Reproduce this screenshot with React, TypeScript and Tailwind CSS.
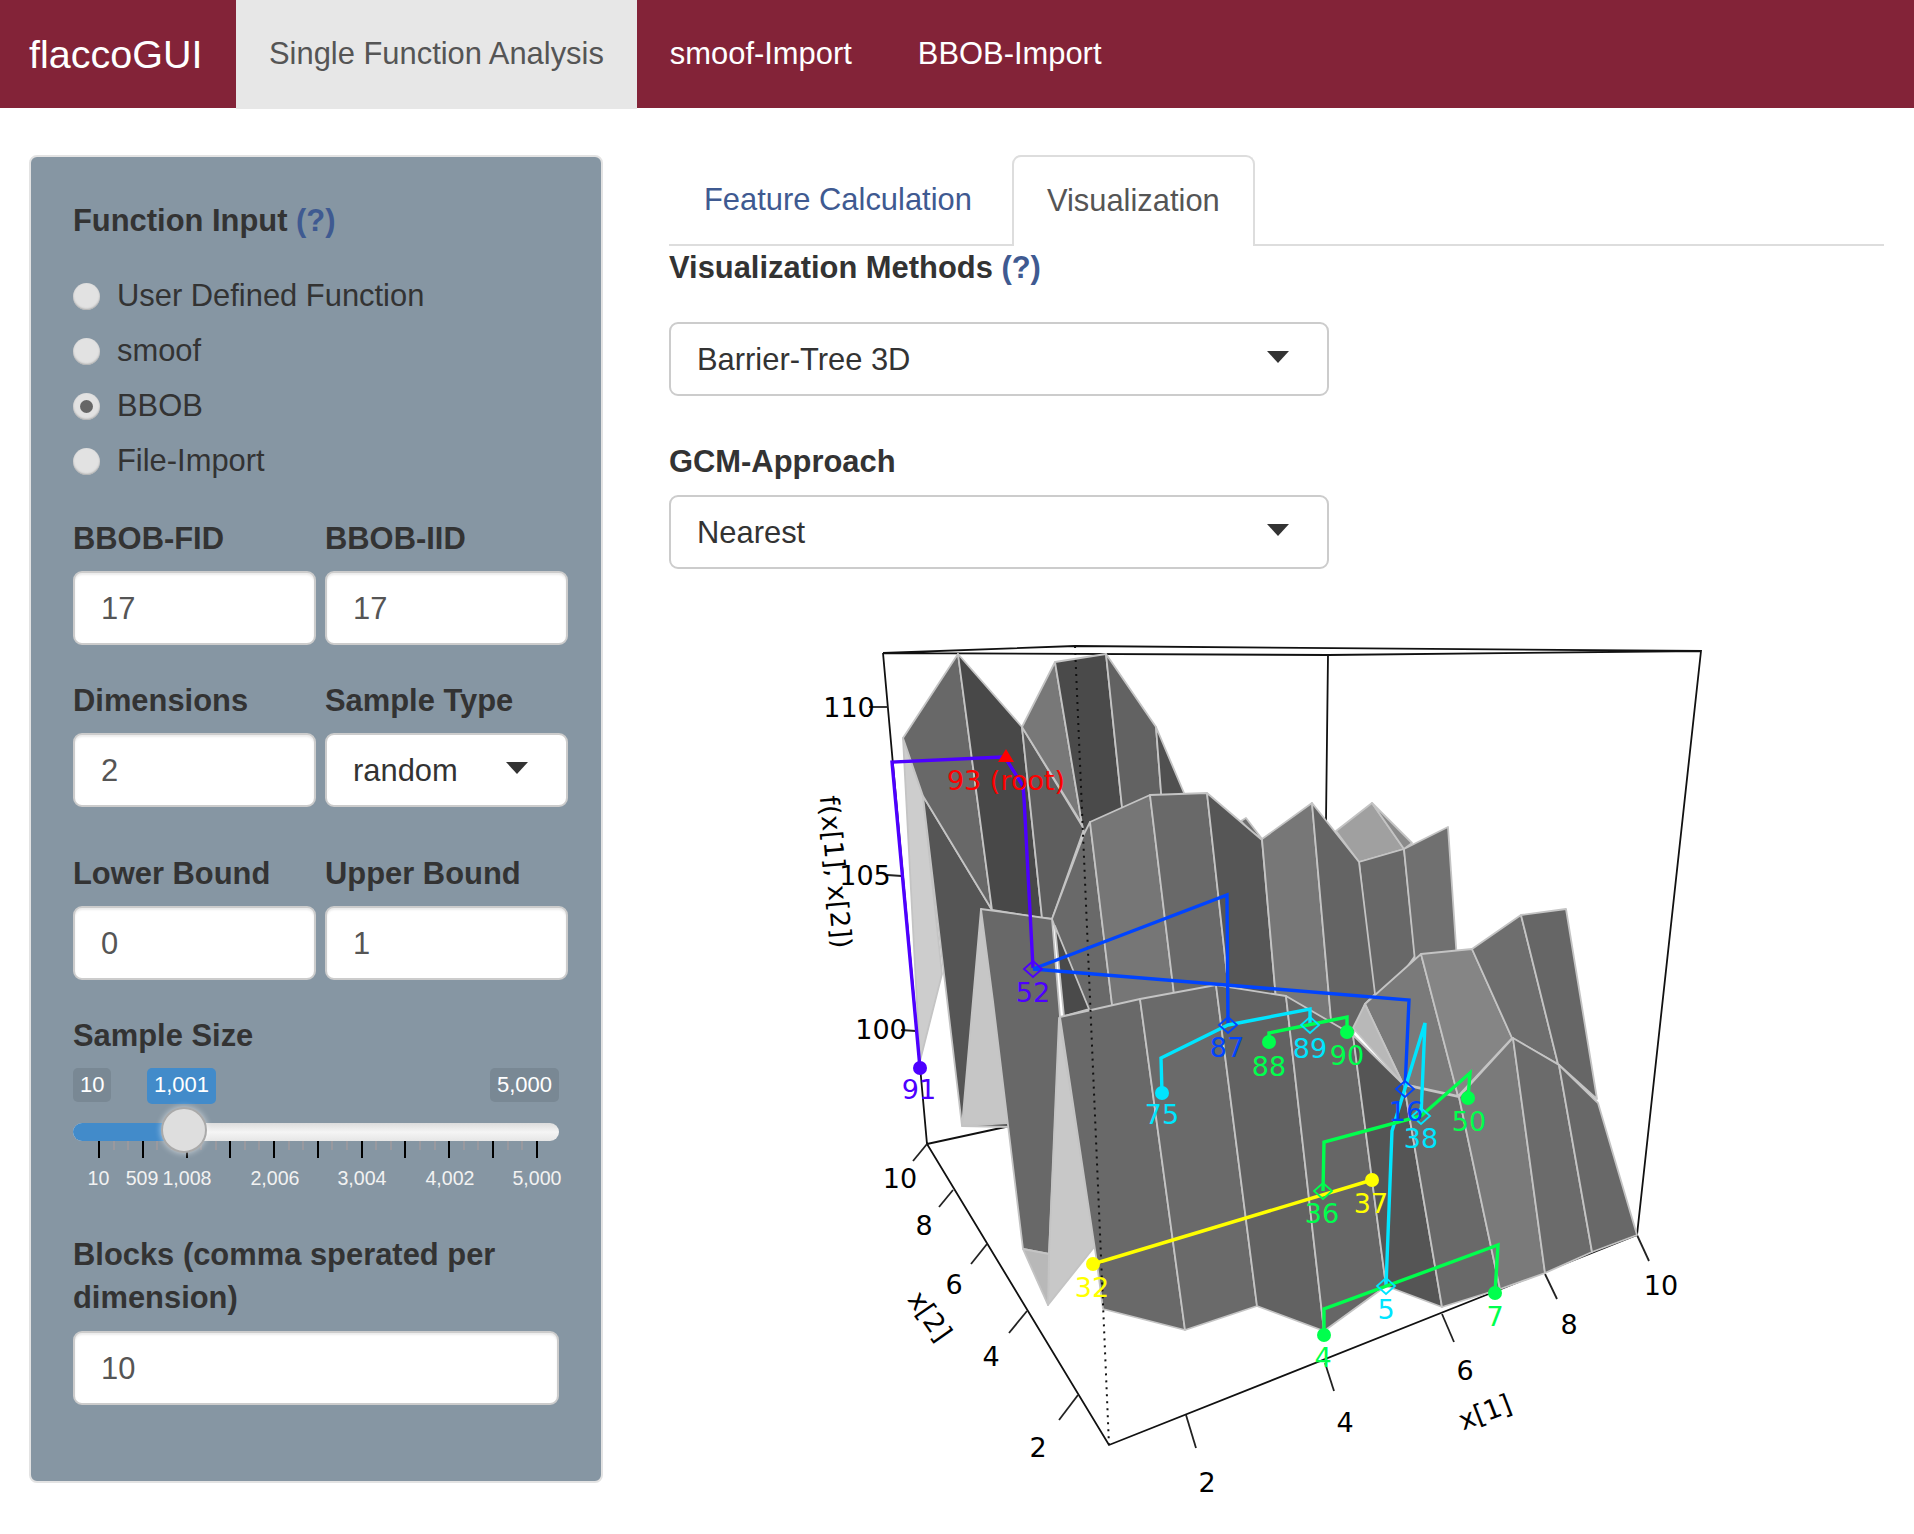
const faces: [string, string][] = [
  // left wedge and back peaks
  ['903,737 923,795 942,973 920,1060', '#cdcdcd'],
  ['923,795 992,909 1010,1126 962,1125', '#555555'],
  ['903,737 958,653 992,909 923,795', '#686868'],
  ['958,653 1022,726 1042,917 992,909', '#484848'],
  ['1022,726 1084,828 1052,918 1042,917', '#5e5e5e'],
  ['1022,726 1055,661 1082,823', '#787878'],
  ['1055,661 1106,653 1125,835 1085,835 1082,823', '#4a4a4a'],
  ['1106,653 1156,726 1164,830 1125,835', '#626262'],
  ['1156,726 1184,792 1184,830 1164,830', '#505050'],
  ['981,908 962,1125 1007,1122 1030,1000', '#c6c6c6'],
  // back ridge behind the middle row
  ['1336,830 1372,802 1404,848 1359,861', '#a0a0a0'],
  ['1372,802 1412,842 1404,848', '#8a8a8a'],
  ['1241,820 1246,817 1262,838 1250,830', '#707070'],
  ['1359,861 1404,848 1415,955 1375,1010', '#686868'],
  ['1404,848 1448,826 1457,960 1415,960', '#707070'],
  // middle row
  ['1052,918 1084,833 1090,821 1114,1020 1089,1020', '#696969'],
  ['1090,821 1150,794 1176,1010 1114,1020', '#767676'],
  ['1150,794 1207,792 1231,1010 1176,1010', '#696969'],
  ['1207,792 1262,839 1277,1010 1231,1010', '#565656'],
  ['1262,838 1312,802 1332,1030 1277,1010', '#777777'],
  ['1312,802 1359,861 1375,993 1365,1003 1353,1034 1332,1030', '#646464'],
  // right block
  ['1365,1003 1421,953 1458,1095 1403,1083', '#7a7a7a'],
  ['1353,1027 1365,1003 1403,1083', '#b8b8b8'],
  ['1421,953 1472,948 1512,1037 1458,1095', '#858585'],
  ['1472,948 1521,914 1558,1063 1512,1037', '#6e6e6e'],
  ['1521,914 1566,908 1597,1098 1558,1063', '#666666'],
  // front left column
  ['981,908 1052,918 1060,1016 1049,1253 1023,1248 993,1000', '#686868'],
  ['1055,925 1089,1008 1064,1015', '#4a4a4a'],
  ['1059,1017 1049,1253 1048,1304 1095,1245', '#c8c8c8'],
  ['1023,1248 1049,1253 1048,1304', '#b8b8b8'],
  // front row
  ['1060,1016 1140,998 1185,1329 1103,1308 1096,1255', '#696969'],
  ['1140,998 1216,984 1257,1305 1185,1329', '#6a6a6a'],
  ['1216,984 1286,995 1324,1330 1257,1305', '#626262'],
  ['1286,995 1353,1034 1386,1285 1324,1330', '#666666'],
  ['1353,1034 1404,1084 1442,1306 1386,1285', '#555555'],
  ['1404,1084 1459,1096 1500,1288 1442,1306', '#696969'],
  ['1459,1096 1513,1037 1545,1272 1500,1288', '#7a7a7a'],
  ['1513,1037 1559,1064 1592,1251 1545,1272', '#6b6b6b'],
  ['1559,1064 1598,1102 1637,1234 1592,1251', '#686868'],
];

const PURPLE = '#4d00ff';
const BLUE = '#0044ff';
const CYAN = '#00e5ff';
const GREEN = '#00ff4d';
const YELLOW = '#ffff00';

const branches: [string, string][] = [
  ['1003,756 892,761 920,1067', PURPLE],
  ['1006,758 1023,785 1024,797 1033,967', PURPLE],
  ['1033,968 1227,894 1228,1024', BLUE],
  ['1033,968 1409,999 1405,1088', BLUE],
  ['1162,1092 1161,1057 1228,1024 1310,1008 1310,1024', CYAN],
  ['1269,1041 1269,1032 1347,1016 1347,1031', GREEN],
  ['1386,1285 1392,1130 1425,1022 1421,1115', CYAN],
  ['1468,1097 1470,1072 1421,1115 1324,1141 1323,1190', GREEN],
  ['1093,1263 1372,1179', YELLOW],
  ['1324,1334 1324,1308 1498,1244 1495,1292', GREEN],
];

const dots: [number, number, string][] = [
  [920, 1067, PURPLE],
  [1162, 1092, CYAN],
  [1269, 1041, GREEN],
  [1347, 1031, GREEN],
  [1468, 1097, GREEN],
  [1372, 1179, YELLOW],
  [1093, 1263, YELLOW],
  [1324, 1334, GREEN],
  [1495, 1292, GREEN],
];

const diamonds: [number, number, string][] = [
  [1033, 968, PURPLE],
  [1228, 1024, BLUE],
  [1310, 1024, CYAN],
  [1405, 1088, BLUE],
  [1421, 1115, CYAN],
  [1323, 1190, GREEN],
  [1386, 1285, CYAN],
];

const nodeLabels: [string, number, number, string][] = [
  ['91', 919, 1088, PURPLE],
  ['52', 1033, 991, PURPLE],
  ['87', 1227, 1046, BLUE],
  ['88', 1269, 1065, GREEN],
  ['89', 1310, 1047, CYAN],
  ['90', 1347, 1054, GREEN],
  ['75', 1162, 1113, CYAN],
  ['16', 1406, 1110, BLUE],
  ['38', 1421, 1137, CYAN],
  ['50', 1469, 1120, GREEN],
  ['36', 1322, 1212, GREEN],
  ['37', 1371, 1202, YELLOW],
  ['32', 1092, 1286, YELLOW],
  ['5', 1386, 1308, CYAN],
  ['4', 1323, 1356, GREEN],
  ['7', 1495, 1315, GREEN],
];

const axisTicks = [
  'M869 706L888 706',
  'M887 874L902 875',
  'M901 1029L916 1030',
  'M927 1143L913 1160',
  'M953 1189L939 1206',
  'M987 1243L971 1263',
  'M1027 1310L1009 1332',
  'M1078 1394L1059 1419',
  'M1186 1414L1196 1447',
  'M1325 1362L1334 1390',
  'M1442 1313L1454 1341',
  'M1545 1273L1557 1298',
  'M1637 1234L1649 1260',
];

const axisLabels: [string, number, number][] = [
  ['110', 849, 706],
  ['105', 865, 874],
  ['100', 881, 1028],
  ['10', 900, 1177],
  ['8', 924, 1224],
  ['6', 954, 1283],
  ['4', 991, 1355],
  ['2', 1038, 1446],
  ['2', 1207, 1481],
  ['4', 1345, 1421],
  ['6', 1465, 1369],
  ['8', 1569, 1323],
  ['10', 1661, 1284],
];

function Plot() {
  return (
    <svg viewBox="669 640 1215 894" className="block w-[1215px] h-[894px]" style={{ fontFamily: '"DejaVu Sans", sans-serif' }}>
      <path
        d="M883 652L1075 645L1701 650L1637 1234M883 652L1328 654L1701 650M1328 654L1326 820M883 652L927 1143L1109 1444L1637 1234M927 1143L1010 1125"
        fill="none"
        stroke="#111"
        strokeWidth="1.8"
      />
      {axisTicks.map((d) => (
        <path key={d} d={d} stroke="#222" strokeWidth="1.8" />
      ))}
      {faces.map(([points, fill]) => (
        <polygon key={points} points={points} fill={fill} stroke="#c4c4c4" strokeWidth="1.8" strokeLinejoin="round" />
      ))}
      <path d="M1075 645L1109 1444" stroke="#111" strokeWidth="2" strokeDasharray="2 5" fill="none" />
      {branches.map(([points, color]) => (
        <polyline key={points} points={points} fill="none" stroke={color} strokeWidth="3.4" />
      ))}
      <polygon points="1006,748 998,761 1014,761" fill="#ff0000" />
      {dots.map(([x, y, color]) => (
        <circle key={`${x}-${y}`} cx={x} cy={y} r="7" fill={color} />
      ))}
      {diamonds.map(([x, y, color]) => (
        <polygon
          key={`${x}-${y}`}
          points={`${x},${y - 8} ${x + 9},${y} ${x},${y + 8} ${x - 9},${y}`}
          fill="none"
          stroke={color}
          strokeWidth="1.8"
        />
      ))}
      {nodeLabels.map(([label, x, y, color]) => (
        <text key={label} x={x} y={y} fill={color} fontSize="27" textAnchor="middle" dominantBaseline="central">
          {label}
        </text>
      ))}
      <text x="1006" y="779" fill="#ff0000" fontSize="27" textAnchor="middle" dominantBaseline="central">
        93 (root)
      </text>
      {axisLabels.map(([label, x, y]) => (
        <text key={`${label}-${x}`} x={x} y={y} fill="#000" fontSize="27" textAnchor="middle" dominantBaseline="central">
          {label}
        </text>
      ))}
      <text x="836" y="871" fill="#000" fontSize="26.5" textAnchor="middle" dominantBaseline="central" transform="rotate(85 836 871)">
        f(x[1], x[2])
      </text>
      <text x="930" y="1315" fill="#000" fontSize="27" textAnchor="middle" dominantBaseline="central" transform="rotate(55 930 1315)">
        x[2]
      </text>
      <text x="1485" y="1411" fill="#000" fontSize="27" textAnchor="middle" dominantBaseline="central" transform="rotate(-21 1485 1411)">
        x[1]
      </text>
    </svg>
  );
}

function Radio({ label, checked }: { label: string; checked?: boolean }) {
  return (
    <div className="flex items-center h-[44px]">
      <span className="flex items-center justify-center w-[27px] h-[27px] rounded-full bg-[#e2e2e2] shadow-[inset_0_-1px_2px_#a9a9a9]">
        {checked && <span className="w-[13px] h-[13px] rounded-full bg-[#666]" />}
      </span>
      <span className="ml-[17px] text-[#333]">{label}</span>
    </div>
  );
}

function Field({ value, className = 'w-full' }: { value: string; className?: string }) {
  return (
    <input
      readOnly
      value={value}
      className={`block h-[74px] px-[26px] pt-[2px] bg-white border-2 border-[#ccc] rounded-[9px] text-[#555] shadow-[inset_0_2px_2px_rgba(0,0,0,0.08)] outline-none ${className}`}
    />
  );
}

function SelectBox({ value, className }: { value: string; className: string }) {
  return (
    <div className={`flex items-center justify-between h-[74px] pl-[26px] pr-[38px] pt-[2px] bg-white border-2 border-[#ccc] rounded-[9px] text-[#333] ${className}`}>
      <span>{value}</span>
      <span className="w-0 h-0 mb-[6px] border-x-[11px] border-x-transparent border-t-[12px] border-t-[#333]" />
    </div>
  );
}

function Pair({ left, right, children }: { left: string; right: string; children: React.ReactNode }) {
  return (
    <div>
      <div className="grid grid-cols-[243px_243px] gap-x-[9px] font-bold text-[#333] h-[44px] leading-[46px]">
        <span>{left}</span>
        <span>{right}</span>
      </div>
      <div className="grid grid-cols-[243px_243px] gap-x-[9px] mt-[11px]">{children}</div>
    </div>
  );
}

function SampleSlider() {
  // major ticks every 43.76px starting at x=98 of the page, two faint ones between
  const major = Array.from({ length: 11 }, (_, i) => 25 + i * 43.76);
  const minor = Array.from({ length: 40 }, (_, i) => 25 + i * 14.59).filter((_, i) => i % 3 !== 0 && i < 30);
  const gridLabels: [string, number][] = [
    ['10', 25.5],
    ['509', 69],
    ['1,008', 114],
    ['2,006', 202],
    ['3,004', 289],
    ['4,002', 377],
    ['5,000', 464],
  ];
  return (
    <div className="relative h-[176px] text-white">
      <span className="absolute left-0 top-[11px] h-[34px] px-[7px] rounded-[5px] bg-[#798894] text-[22px] leading-[34px]">10</span>
      <span className="absolute left-[74px] top-[11px] h-[36px] px-[7px] rounded-[5px] bg-[#428bca] text-[22px] leading-[34px]">1,001</span>
      <span className="absolute right-0 top-[11px] h-[34px] px-[7px] rounded-[5px] bg-[#798894] text-[22px] leading-[34px]">5,000</span>
      <div className="absolute left-0 right-0 top-[66px] h-[18px] rounded-full bg-gradient-to-b from-[#dcdcdc] via-[#f5f5f5] to-[#e6e6e6]" />
      <div className="absolute left-0 w-[111px] top-[66px] h-[18px] rounded-l-full bg-[#428bca]" />
      {minor.map((x) => (
        <span key={x} className="absolute top-[84px] w-[2px] h-[9px] bg-[#99999f]" style={{ left: x }} />
      ))}
      {major.map((x) => (
        <span key={x} className="absolute top-[84px] w-[2px] h-[17px] bg-black" style={{ left: x }} />
      ))}
      <div className="absolute left-[88px] top-[50px] w-[46px] h-[46px] rounded-full bg-[#dedede] border-2 border-[#aaa] shadow-[0_0_6px_rgba(255,255,255,0.6)]" />
      {gridLabels.map(([label, x]) => (
        <span key={label} className="absolute top-[109px] -translate-x-1/2 text-[19.6px] leading-[24px] text-[#f2f2f2]" style={{ left: x }}>
          {label}
        </span>
      ))}
    </div>
  );
}

export default function App() {
  return (
    <div className="h-[1534px] overflow-hidden bg-white text-[30.9px] leading-[44px]" style={{ fontFamily: '"Liberation Sans", Arial, sans-serif' }}>
      <nav className="flex h-[108px] bg-[#832338] text-white">
        <div className="w-[236px] pl-[29px] text-[39.5px] leading-[108px]">flaccoGUI</div>
        <div className="h-[109px] px-[33px] bg-[#e7e7e7] text-[#555] leading-[108px]">Single Function Analysis</div>
        <div className="px-[33px] leading-[108px]">smoof-Import</div>
        <div className="px-[33px] leading-[108px]">BBOB-Import</div>
      </nav>

      <div className="flex mt-[47px]">
        <aside className="w-[574px] ml-[29px] h-[1328px] px-[42px] pt-[41px] bg-[#8696a3] border-2 border-[#e3e3e3] rounded-[8px] shrink-0">
          <div className="h-[44px] leading-[46px] font-bold text-[#333]">
            Function Input <span className="text-[#3f5a91]">(?)</span>
          </div>
          <div className="flex flex-col gap-[11px] mt-[32px]">
            <Radio label="User Defined Function" />
            <Radio label="smoof" />
            <Radio label="BBOB" checked />
            <Radio label="File-Import" />
          </div>
          <div className="mt-[33px]">
            <Pair left="BBOB-FID" right="BBOB-IID">
              <Field value="17" />
              <Field value="17" />
            </Pair>
          </div>
          <div className="mt-[33px]">
            <Pair left="Dimensions" right="Sample Type">
              <Field value="2" />
              <SelectBox value="random" className="w-full" />
            </Pair>
          </div>
          <div className="mt-[44px]">
            <Pair left="Lower Bound" right="Upper Bound">
              <Field value="0" />
              <Field value="1" />
            </Pair>
          </div>
          <div className="mt-[33px] h-[44px] leading-[46px] font-bold text-[#333]">Sample Size</div>
          <SampleSlider />
          <div className="font-bold text-[#333] leading-[43px]">Blocks (comma sperated per dimension)</div>
          <div className="mt-[12px]">
            <Field value="10" className="w-[486px]" />
          </div>
        </aside>

        <main className="ml-[66px] w-[1215px] shrink-0">
          <div className="flex h-[91px] border-b-2 border-[#ddd]">
            <div className="h-[91px] px-[35px] pt-[23px] mr-[5px] text-[#3f5a91]">Feature Calculation</div>
            <div className="h-[91px] px-[33px] pt-[22px] bg-white border-2 border-b-0 border-[#ddd] rounded-t-[9px] text-[#555]">Visualization</div>
          </div>
          <div className="font-bold text-[#333]">
            Visualization Methods <span className="text-[#3f5a91]">(?)</span>
          </div>
          <SelectBox value="Barrier-Tree 3D" className="w-[660px] mt-[32px]" />
          <div className="mt-[44px] font-bold text-[#333]">GCM-Approach</div>
          <SelectBox value="Nearest" className="w-[660px] mt-[11px]" />
          <div className="mt-[72px]">
            <Plot />
          </div>
        </main>
      </div>
    </div>
  );
}
